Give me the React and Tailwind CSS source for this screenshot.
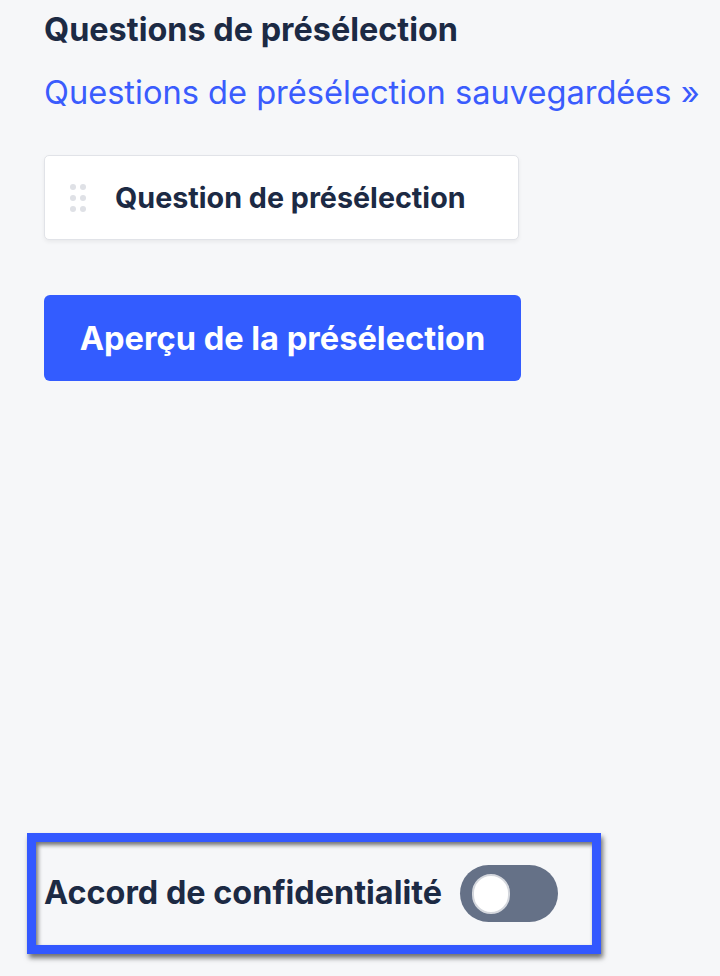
export default function App() {
    return (
        <div className="flex h-[976px] w-[720px] flex-col overflow-hidden bg-[#f6f7f9] font-['Inter','Liberation_Sans',sans-serif]">
            <div className="pl-[44px] pt-[10px]">
                <h2 className="text-[32.4px] font-bold leading-[40px] text-[#1c2a44]">Questions de présélection</h2>
                <a href="#" className="mt-[22px] block text-[32.6px] leading-[40px] text-[#3a5cfd]">
                    Questions de présélection sauvegardées »
                </a>

                {/* question card */}
                <div className="mt-[43px] flex h-[85px] w-[475px] items-center rounded-[5px] border border-[#e1e3e8] bg-white shadow-[0_2px_4px_rgba(0,0,0,0.06)]">
                    <div className="ml-[25px] grid grid-cols-2 gap-x-[4px] gap-y-[5px]">
                        {[0, 1, 2, 3, 4, 5].map(i => (
                            <span key={i} className="block h-[6px] w-[6px] rounded-full bg-[#dfe1e6]" />
                        ))}
                    </div>
                    <span className="ml-[29px] text-[28.7px] font-bold text-[#1c2a44]">Question de présélection</span>
                </div>

                <button type="button" className="mt-[55px] flex h-[86px] w-[477px] items-center justify-center rounded-[6px] bg-[#335cff] text-[32.6px] font-bold text-white">
                    Aperçu de la présélection
                </button>
            </div>

            {/* highlighted setting */}
            <div className="mb-[22px] ml-[27px] mt-auto flex h-[121px] w-[574px] items-center border-[9px] border-[#3358ff] pl-[8px] shadow-[inset_2px_3px_4px_rgba(0,0,0,0.55),2px_4px_5px_rgba(0,0,0,0.55)]">
                <span className="text-[32.4px] font-bold text-[#1c2a44]">Accord de confidentialité</span>
                <div className="ml-[18px] flex h-[57px] w-[98px] items-center rounded-full bg-[#657187] pl-[12px]">
                    <span className="block h-[40px] w-[38px] rounded-full border-2 border-[#d4d7dd] bg-white" />
                </div>
            </div>
        </div>
    )
}
